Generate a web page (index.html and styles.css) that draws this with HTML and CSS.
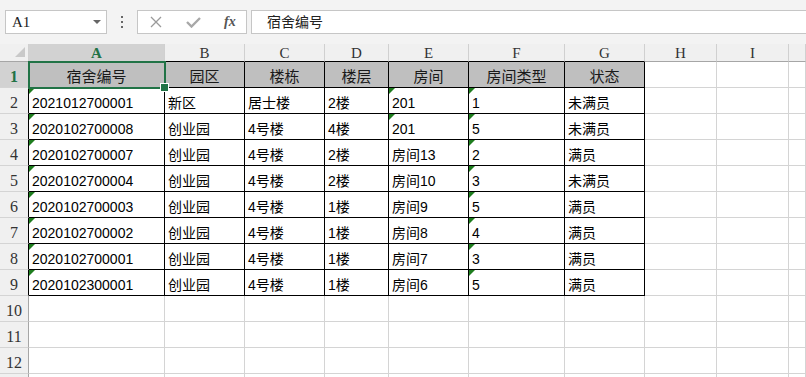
FILE: index.html
```html
<!DOCTYPE html>
<html lang="zh-CN">
  <head>
    <meta charset="utf-8" />
    <link rel="stylesheet" href="styles.css">
  </head>
  <body>
    <div class="toolbar">
      <div class="namebox">
        <span>A1</span>
        <span class="caret"></span>
      </div>
      <div class="grip"><i></i><i></i><i></i></div>
      <div class="fnbox">
        <svg width="12" height="12" viewBox="0 0 12 12"><path d="M1 1 L11 11 M11 1 L1 11" stroke="#9a9a9a" stroke-width="1.3" fill="none"/></svg>
        <svg width="15" height="12" viewBox="0 0 15 12"><path d="M1 6 L5.5 10.5 L14 2" stroke="#a8a8a8" stroke-width="2.4" fill="none"/></svg>
        <span class="fx">fx</span>
      </div>
      <div class="formula">宿舍编号</div>
    </div>

    <div class="sheet">
      <!-- column headers -->
      <div class="corner"></div>
      <div class="ch sel">A</div>
      <div class="ch in">B</div>
      <div class="ch in">C</div>
      <div class="ch in">D</div>
      <div class="ch in">E</div>
      <div class="ch in">F</div>
      <div class="ch in">G</div>
      <div class="ch">H</div>
      <div class="ch">I</div>
      <div class="ch"></div>

      <!-- row 1 -->
      <div class="rh sel">1</div>
      <div class="c hd active">宿舍编号</div>
      <div class="c hd">园区</div>
      <div class="c hd">楼栋</div>
      <div class="c hd">楼层</div>
      <div class="c hd">房间</div>
      <div class="c hd">房间类型</div>
      <div class="c hd">状态</div>
      <div class="e"></div><div class="e"></div><div class="e"></div>

      <div class="rh in">2</div>
      <div class="c t">2021012700001</div>
      <div class="c">新区</div>
      <div class="c">居士楼</div>
      <div class="c">2楼</div>
      <div class="c t">201</div>
      <div class="c t">1</div>
      <div class="c">未满员</div>
      <div class="e"></div><div class="e"></div><div class="e"></div>

      <div class="rh in">3</div>
      <div class="c t">2020102700008</div>
      <div class="c">创业园</div>
      <div class="c">4号楼</div>
      <div class="c">4楼</div>
      <div class="c t">201</div>
      <div class="c t">5</div>
      <div class="c">未满员</div>
      <div class="e"></div><div class="e"></div><div class="e"></div>

      <div class="rh in">4</div>
      <div class="c t">2020102700007</div>
      <div class="c">创业园</div>
      <div class="c">4号楼</div>
      <div class="c">2楼</div>
      <div class="c">房间13</div>
      <div class="c t">2</div>
      <div class="c">满员</div>
      <div class="e"></div><div class="e"></div><div class="e"></div>

      <div class="rh in">5</div>
      <div class="c t">2020102700004</div>
      <div class="c">创业园</div>
      <div class="c">4号楼</div>
      <div class="c">2楼</div>
      <div class="c">房间10</div>
      <div class="c t">3</div>
      <div class="c">未满员</div>
      <div class="e"></div><div class="e"></div><div class="e"></div>

      <div class="rh in">6</div>
      <div class="c t">2020102700003</div>
      <div class="c">创业园</div>
      <div class="c">4号楼</div>
      <div class="c">1楼</div>
      <div class="c">房间9</div>
      <div class="c t">5</div>
      <div class="c">满员</div>
      <div class="e"></div><div class="e"></div><div class="e"></div>

      <div class="rh in">7</div>
      <div class="c t">2020102700002</div>
      <div class="c">创业园</div>
      <div class="c">4号楼</div>
      <div class="c">1楼</div>
      <div class="c">房间8</div>
      <div class="c t">4</div>
      <div class="c">满员</div>
      <div class="e"></div><div class="e"></div><div class="e"></div>

      <div class="rh in">8</div>
      <div class="c t">2020102700001</div>
      <div class="c">创业园</div>
      <div class="c">4号楼</div>
      <div class="c">1楼</div>
      <div class="c">房间7</div>
      <div class="c t">3</div>
      <div class="c">满员</div>
      <div class="e"></div><div class="e"></div><div class="e"></div>

      <div class="rh in">9</div>
      <div class="c t">2020102300001</div>
      <div class="c">创业园</div>
      <div class="c">4号楼</div>
      <div class="c">1楼</div>
      <div class="c">房间6</div>
      <div class="c t">5</div>
      <div class="c">满员</div>
      <div class="e"></div><div class="e"></div><div class="e"></div>

      <div class="rh">10</div>
      <div class="e"></div><div class="e"></div><div class="e"></div><div class="e"></div><div class="e"></div>
      <div class="e"></div><div class="e"></div><div class="e"></div><div class="e"></div><div class="e"></div>

      <div class="rh">11</div>
      <div class="e"></div><div class="e"></div><div class="e"></div><div class="e"></div><div class="e"></div>
      <div class="e"></div><div class="e"></div><div class="e"></div><div class="e"></div><div class="e"></div>

      <div class="rh">12</div>
      <div class="e"></div><div class="e"></div><div class="e"></div><div class="e"></div><div class="e"></div>
      <div class="e"></div><div class="e"></div><div class="e"></div><div class="e"></div><div class="e"></div>

      <!-- row 13 only peeks in at the bottom edge -->
      <div class="rh"></div>
      <div class="e"></div><div class="e"></div><div class="e"></div><div class="e"></div><div class="e"></div>
      <div class="e"></div><div class="e"></div><div class="e"></div><div class="e"></div><div class="e"></div>
    </div>
  </body>
</html>
```

FILE: styles.css
```css
* {
  margin: 0;
  box-sizing: border-box;
}
html,
body {
  height: 100%;
  overflow: hidden;
}
body {
  background-color: #fff;
  font-family: "Liberation Sans", "Noto Sans CJK SC", sans-serif;
  font-size: 14px;
  color: #000;
}

/* formula bar */
.toolbar {
  height: 44px;
  background-color: #f3f3f3;
  display: flex;
  align-items: flex-start;
  padding: 10px 0 0 5px;
}
.namebox {
  width: 102px;
  height: 24px;
  background-color: #fff;
  border: 1px solid #c6c6c6;
  display: flex;
  align-items: center;
  justify-content: space-between;
  padding: 0 5px 0 6px;
  font-family: "Liberation Serif", serif;
  font-size: 15px;
  color: #222;
}
.caret {
  width: 0;
  height: 0;
  border-left: 4px solid transparent;
  border-right: 4px solid transparent;
  border-top: 4px solid #666;
}
.grip {
  width: 30px;
  height: 24px;
  display: flex;
  flex-direction: column;
  align-items: center;
  justify-content: center;
  gap: 3px;
}
.grip i {
  width: 2px;
  height: 2px;
  background-color: #666;
}
.fnbox {
  width: 110px;
  height: 24px;
  background-color: #fff;
  border: 1px solid #c6c6c6;
  display: flex;
  align-items: center;
  padding-left: 12px;
  gap: 24px;
}
.fx {
  font-family: "Liberation Serif", serif;
  font-style: italic;
  font-weight: bold;
  font-size: 14px;
  color: #555;
  margin-left: -1px;
}
.formula {
  flex: 1;
  height: 24px;
  margin-left: 4px;
  margin-right: -2px;
  background-color: #fff;
  border: 1px solid #c6c6c6;
  padding-left: 15px;
  line-height: 22px;
  font-size: 14px;
  color: #222;
}

/* grid */
.sheet {
  display: grid;
  grid-template-columns: 29px 136px 80px 80px 64px 80px 96px 80px 72px 72px 1fr;
  grid-template-rows: 18px repeat(13, 26px);
}
.sheet > div {
  position: relative;
  display: flex;
  align-items: flex-end;
  white-space: nowrap;
  line-height: 16px;
}

.corner {
  background-color: #f0f0f0;
  border-right: 1px solid #d0d0d0;
  border-bottom: 1px solid #a6a6a6;
}
.corner::after {
  content: "";
  position: absolute;
  right: 3px;
  bottom: 4px;
  border-left: 10px solid transparent;
  border-bottom: 10px solid #c9c9c9;
}
.ch {
  background-color: #f0f0f0;
  border-right: 1px solid #d0d0d0;
  border-bottom: 1px solid #a6a6a6;
  justify-content: center;
  align-items: center !important;
  font-family: "Liberation Serif", serif;
  font-size: 15px;
  color: #333;
}
.ch.in {
  border-bottom-color: #000;
}
.ch.sel {
  background-color: #d2d2d2;
  color: #217346;
  font-weight: bold;
  border-bottom-color: #217346;
}
.rh {
  background-color: #f0f0f0;
  border-right: 1px solid #a6a6a6;
  border-bottom: 1px solid #d4d4d4;
  justify-content: center;
  padding-bottom: 2px;
  font-family: "Liberation Serif", serif;
  font-size: 16px;
  color: #333;
}
.rh.in {
  border-right-color: #000;
}
.rh.sel {
  background-color: #d2d2d2;
  color: #217346;
  font-weight: bold;
  border-right-color: #217346;
}

.c {
  border-right: 1px solid #000;
  border-bottom: 1px solid #000;
  padding: 0 0 2px 3px;
}
.c.hd {
  background-color: #bfbfbf;
  justify-content: center;
  padding-left: 0;
  font-size: 15px;
  color: #1a1a1a;
}
.c.t::before {
  content: "";
  position: absolute;
  left: 0;
  top: 0;
  border-top: 6px solid #1e7d1e;
  border-right: 6px solid transparent;
}
.e {
  border-right: 1px solid #d4d4d4;
  border-bottom: 1px solid #d4d4d4;
}

/* active cell */
.active::after {
  content: "";
  position: absolute;
  left: -1px;
  top: -1px;
  right: -2px;
  bottom: -2px;
  border: 2px solid #217346;
  z-index: 2;
}
.active::before {
  content: "";
  position: absolute;
  right: -5px;
  bottom: -5px;
  width: 7px;
  height: 7px;
  background-color: #217346;
  border: 1px solid #fff;
  z-index: 3;
}
```
